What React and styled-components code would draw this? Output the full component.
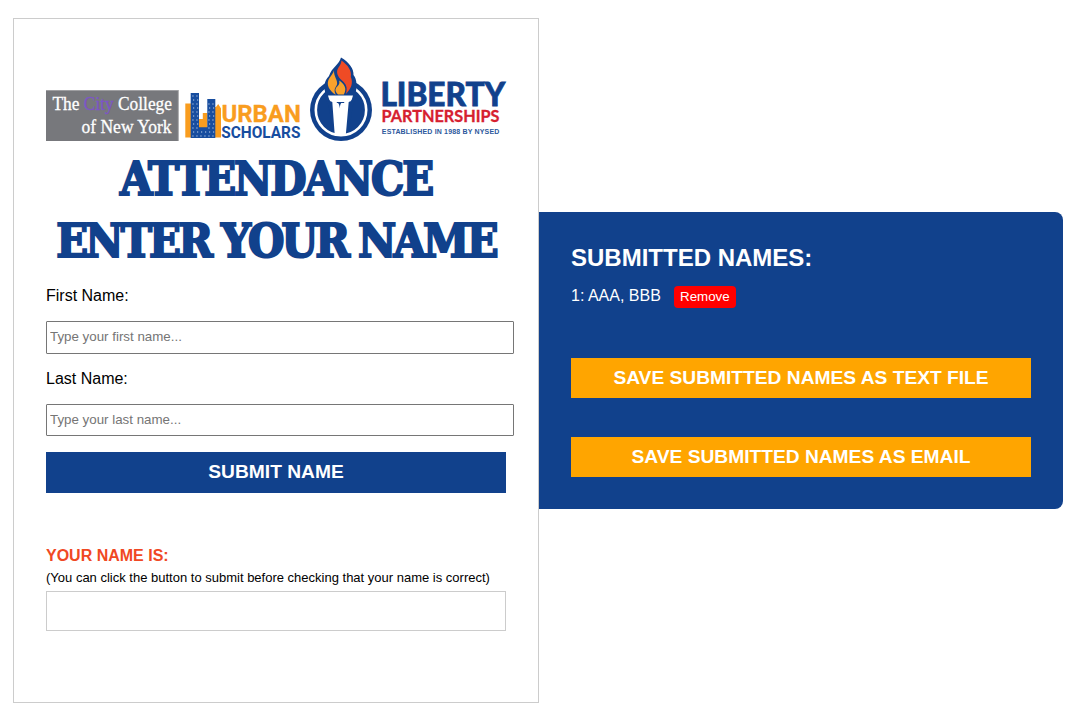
import React, { useState } from 'react';
import styled, { createGlobalStyle } from 'styled-components';

const BLUE = '#11418c';

const GlobalStyle = createGlobalStyle`
  *, *::before, *::after { box-sizing: border-box; }
  body {
    margin: 0;
    background: #fff;
    color: #000;
    font: 16px/18px "Liberation Sans", Arial, sans-serif;
  }
`;

const Page = styled.main`
  display: flex;
  align-items: center;
  padding: 18px 19px 23px 13px;
`;

const Card = styled.section`
  display: flex;
  flex-direction: column;
  width: 526px;
  height: 685px;
  padding: 38px 32px 0;
  border: 1px solid #ccc;
`;

const LogoRow = styled.header`
  display: flex;
  align-items: flex-end;
  height: 84px;
  svg { display: block; flex: none; overflow: visible; }
`;

const Title = styled.h1`
  margin: 7px -10px 0;
  color: ${BLUE};
  font: bold 46.5px/62px "DejaVu Serif Condensed", "DejaVu Serif", serif;
  text-align: center;
  white-space: nowrap;
  -webkit-text-stroke: 2px ${BLUE};
`;

const TitleLine = styled.span`
  display: block;
  letter-spacing: ${(p) => p.$spacing}px;
  word-spacing: -1px;
`;

const Label = styled.label`
  margin-top: ${(p) => p.$gap}px;
`;

const TextInput = styled.input`
  width: 468px;
  height: ${(p) => p.$height}px;
  margin: 16px 0 0;
  padding: 0 3px 2px;
  border: 1px solid #767676;
  border-radius: 1px;
  font: 13.333px "Liberation Sans", Arial, sans-serif;
  &::placeholder { color: #757575; }
`;

const Button = styled.button`
  display: block;
  width: 100%;
  border: 0;
  padding: 0 0 2px;
  color: #fff;
  font: bold 19.2px "Liberation Sans", Arial, sans-serif;
  cursor: pointer;
`;

const SubmitButton = styled(Button)`
  height: 41px;
  margin-top: 16px;
  background: ${BLUE};
`;

const SaveButton = styled(Button)`
  height: 40px;
  margin-top: ${(p) => p.$gap}px;
  padding-bottom: 0;
  background: orange;
`;

const PreviewTitle = styled.strong`
  margin-top: 54px;
  color: #f04823;
`;

const PreviewHint = styled.span`
  margin-top: 4px;
  font-size: 13px;
  white-space: nowrap;
`;

const PreviewBox = styled.div`
  height: 40px;
  margin-top: 4px;
  border: 1px solid #ccc;
`;

const Panel = styled.section`
  width: 524px;
  height: 297px;
  padding: 32px;
  border-radius: 0 8px 8px 0;
  background: ${BLUE};
  color: #fff;
`;

const PanelTitle = styled.h2`
  margin: 0 0 14px;
  font-size: 24px;
  line-height: 28px;
`;

const NameList = styled.ul`
  list-style: none;
  height: 22px;
  margin: 0;
  padding: 0;
`;

const NameRow = styled.li`
  display: flex;
  gap: 13px;
  line-height: 20px;
`;

const RemoveButton = styled.button`
  width: 62px;
  height: 22px;
  padding: 0 0 1px;
  border: 0;
  border-radius: 4px;
  background: red;
  color: #fff;
  font: 13.333px "Liberation Sans", Arial, sans-serif;
`;

function CollegeLogo() {
  return (
    <svg width="133" height="51" viewBox="0 0 133 51">
      <rect width="132.5" height="51" fill="#77787c" />
      <path d="M0 .5H132.3V51" fill="none" stroke="#a9aaac" strokeWidth=".8" />
      <g fill="#fff" stroke="#fff" strokeWidth=".3" fontFamily="Liberation Serif, serif" fontSize="19.5">
        <text x="6.5" y="20" textLength="119.5" lengthAdjust="spacingAndGlyphs">
          The <tspan fill="#7d55c7" stroke="#7d55c7">City</tspan> College
        </text>
        <text x="35.5" y="42.5" textLength="90" lengthAdjust="spacingAndGlyphs">of New York</text>
      </g>
    </svg>
  );
}

const WINDOWS = [];
for (let row = 0; row < 11; row += 1) {
  for (let col = 0; col < 6; col += 1) {
    const x = 7.4 + col * 4 + (row % 2) * 0.7;
    const y = 5.4 + row * 4;
    const left = x < 13.5;
    const right = x > 23 && y > 11;
    if (left || right || y > 38.5) WINDOWS.push([x, y]);
  }
}

function UrbanLogo() {
  return (
    <svg width="116" height="51" viewBox="0 0 116 51">
      <path d="M.3 13.5H6V47.6H.3ZM13.5 29H17.8V23H22.5V38H13.5ZM30 17H31L33.2 14L36 18.5V47.6H30Z" fill="#f99d1f" />
      <path d="M5.7 3H14V37.3H22.3V9H30.3V48H5.7Z" fill="#174d9f" />
      {WINDOWS.map(([x, y]) => (
        <rect key={`${x}-${y}`} x={x} y={y} width="1.1" height="1.2" fill="#b4c8e4" />
      ))}
      <g fontFamily="Roboto, sans-serif" fontWeight="bold">
        <text x="36.4" y="32" fontSize="24.8" fill="#f99d1f" stroke="#f99d1f" strokeWidth=".3" textLength="79.5" lengthAdjust="spacingAndGlyphs">URBAN</text>
        <text x="36.2" y="47.6" fontSize="16.4" fill="#174d9f" textLength="79.3" lengthAdjust="spacingAndGlyphs">SCHOLARS</text>
      </g>
    </svg>
  );
}

function LibertyLogo() {
  return (
    <svg width="196" height="84" viewBox="0 0 196 84">
      <circle cx="31" cy="53" r="31" fill={BLUE} />
      <circle cx="31" cy="53" r="25.2" fill="none" stroke="#fff" strokeWidth="2.6" />
      <path d="M31 .5C39 5 44 12 43.5 18C47 22 47.5 31 45 37L46 41L43 48L39 74H22.5L18.5 48L15 41L16 37C13 31 14 24 19 19C22 10 29 8 31 .5Z" fill={BLUE} />
      <path d="M31.4 3.5C38 8 42 14 40.8 20C43.5 26 41 32 35.8 37C38 30.5 36 27 32 23.5C27.5 19.5 25.5 15 28.5 10.5C30.3 8 31.4 6 31.4 3.5Z" fill="#ef4b25" />
      <path d="M24 13.2C23.7 20 28 23 27 27.5C26 30.5 23 32 25.8 37.7C19 34 15.5 27 19.5 21C21.5 18 23.5 16 24 13.2Z" fill="#f9a12b" />
      <path d="M29.2 23.5C34 27 37.5 31 33.8 37.5H28C24.5 34 25 31.5 27.5 29.3C29.2 27.8 29.8 26 29.2 23.5Z" fill="#f9a12b" />
      <path d="M18 38.6H43L41.8 42.5Q41 44.7 38.7 45L35.7 79H24.8L22.3 45Q20 44.7 19.2 42.5Z" fill="#fff" />
      <path d="M26.8 45H34.2V46H31.3Q30 47 29.8 51.5Q29.4 47 28 46H26.8Z" fill={BLUE} />
      <text x="70.4" y="49.3" fontFamily="Lato, sans-serif" fontWeight="900" fontSize="33" fill={BLUE} stroke={BLUE} strokeWidth=".8" textLength="124.8" lengthAdjust="spacingAndGlyphs">LIBERTY</text>
      <text x="71.5" y="65" fontFamily="Lato, sans-serif" fontWeight="bold" fontSize="16.3" fill="#d6202f" stroke="#d6202f" strokeWidth=".3" textLength="118" lengthAdjust="spacingAndGlyphs">PARTNERSHIPS</text>
      <text x="71.8" y="77.4" fontFamily="Liberation Sans, sans-serif" fontWeight="bold" fontSize="7" fill="#2d599d" textLength="117.5">ESTABLISHED IN 1988 BY NYSED</text>
    </svg>
  );
}

const Spacer = styled.span`
  flex: 0 0 ${(p) => p.$width}px;
`;

export default function App() {
  const [names, setNames] = useState(['AAA, BBB']);
  return (
    <>
      <GlobalStyle />
      <Page>
        <Card>
          <LogoRow>
            <CollegeLogo />
            <Spacer $width={6} />
            <UrbanLogo />
            <Spacer $width={9} />
            <LibertyLogo />
          </LogoRow>
          <Title>
            <TitleLine $spacing={-2.1}>ATTENDANCE</TitleLine>
            <TitleLine $spacing={-2.8}>ENTER YOUR NAME</TitleLine>
          </Title>
          <Label $gap={15} htmlFor="first">First Name:</Label>
          <TextInput $height={33} id="first" placeholder="Type your first name..." />
          <Label $gap={16} htmlFor="last">Last Name:</Label>
          <TextInput $height={32} id="last" placeholder="Type your last name..." />
          <SubmitButton>SUBMIT NAME</SubmitButton>
          <PreviewTitle>YOUR NAME IS:</PreviewTitle>
          <PreviewHint>(You can click the button to submit before checking that your name is correct)</PreviewHint>
          <PreviewBox />
        </Card>
        <Panel>
          <PanelTitle>SUBMITTED NAMES:</PanelTitle>
          <NameList>
            {names.map((name, i) => (
              <NameRow key={name}>
                <span>{i + 1}: {name}</span>
                <RemoveButton onClick={() => setNames(names.filter((n) => n !== name))}>Remove</RemoveButton>
              </NameRow>
            ))}
          </NameList>
          <SaveButton $gap={50}>SAVE SUBMITTED NAMES AS TEXT FILE</SaveButton>
          <SaveButton $gap={39}>SAVE SUBMITTED NAMES AS EMAIL</SaveButton>
        </Panel>
      </Page>
    </>
  );
}
